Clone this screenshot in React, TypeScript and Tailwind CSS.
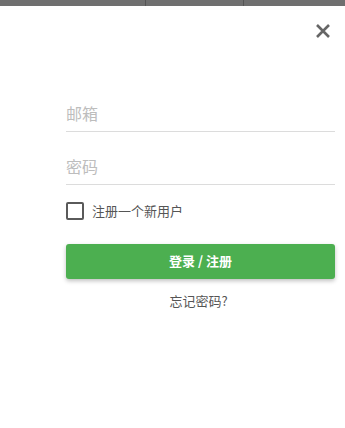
import { useState } from "react";

const App = () => {
  const [email, setEmail] = useState("");
  const [password, setPassword] = useState("");
  const [isNew, setIsNew] = useState(false);

  return (
    <div
      className="min-h-[428px] w-full bg-white"
      style={{ fontFamily: '"Noto Sans CJK SC", "Noto Sans", sans-serif' }}
    >
      {/* Background page peeking above the dialog */}
      <div className="flex h-[6px] w-full bg-[#6f6f6f]">
        <div className="w-[146px] border-r border-[#555]" />
        <div className="w-[98px] border-r border-[#555]" />
        <div className="grow" />
      </div>

      <div className="flex justify-end pr-[14px] pt-[17px]">
        <button aria-label="关闭" className="flex h-[16px] w-[16px] items-center justify-center text-[#666]">
          <svg viewBox="0 0 16 16" className="h-[16px] w-[16px]" fill="none" stroke="currentColor" strokeWidth="2.6" strokeLinecap="butt">
            <path d="M2 2 L14 14 M14 2 L2 14" />
          </svg>
        </button>
      </div>

      <form className="ml-[66px] mr-[10px] mt-[57px] flex flex-col" onSubmit={e => e.preventDefault()}>
        <input
          value={email}
          onChange={e => setEmail(e.target.value)}
          placeholder="邮箱"
          className="h-[36px] border-b border-[#dcdcdc] bg-transparent pb-[2px] text-[16px] text-[#333] outline-none placeholder:text-[#bdbdbd]"
        />
        <input
          type="password"
          value={password}
          onChange={e => setPassword(e.target.value)}
          placeholder="密码"
          className="mt-[17px] h-[36px] border-b border-[#dcdcdc] bg-transparent pb-[2px] text-[16px] text-[#333] outline-none placeholder:text-[#bdbdbd]"
        />

        <label className="mt-[16px] flex cursor-pointer items-center gap-[8px]">
          <span
            onClick={() => setIsNew(!isNew)}
            className="flex h-[18px] w-[18px] items-center justify-center rounded-[2px] border-2 border-[#5a5a5a]"
          >
            {isNew && <span className="h-[8px] w-[8px] bg-[#5a5a5a]" />}
          </span>
          <span className="text-[13px] text-[#555]">注册一个新用户</span>
        </label>

        <button
          type="submit"
          className="mt-[23px] h-[35px] rounded-[3px] bg-[#4caf50] text-[13px] font-bold text-white shadow-[0_2px_4px_rgba(0,0,0,0.25)]"
        >
          登录 / 注册
        </button>

        <a className="mt-[12px] self-center pr-[4px] text-[13px] text-[#555]">忘记密码?</a>
      </form>
    </div>
  );
};

export default App;
